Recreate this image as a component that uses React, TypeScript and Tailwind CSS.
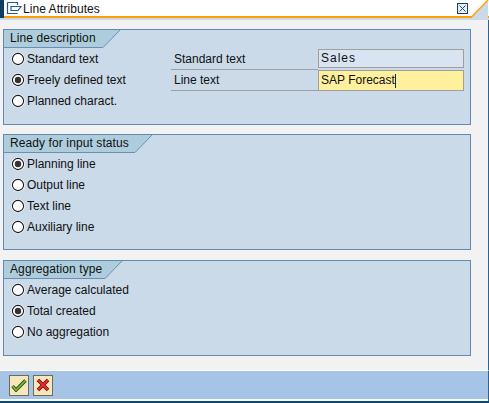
const font = { fontFamily: '"Liberation Sans", Arial, sans-serif' };

function Radio({ checked, label }: { checked?: boolean; label: string }) {
  return (
    <div className="flex h-[21px] items-center">
      <svg width="14" height="14" viewBox="0 0 14 14" className="ml-[7px] mr-[2px] shrink-0">
        <circle cx="7" cy="7" r="6.8" fill="#ffffff" opacity="0.8" />
        <circle cx="7" cy="7" r="5.6" fill="#ffffff" stroke="#1c1c1c" strokeWidth="1.1" />
        {checked && <circle cx="7" cy="7" r="3.2" fill="#333333" />}
      </svg>
      <span className="text-[12px] leading-[14px] text-[#101010]">{label}</span>
    </div>
  );
}

function Header({ title, w }: { title: string; w: number }) {
  return (
    <div className="relative h-[18px] w-full">
      <svg width={w + 20} height="18" className="absolute left-0 top-0">
        <path d={`M0 0H${w + 18}L${w + 1} 17.5H0Z`} fill="#aecddc" />
        <path d={`M${w + 18} 0L${w + 1} 17.5H0`} fill="none" stroke="#6a8fb0" strokeWidth="1" />
      </svg>
      <span className="absolute left-[6px] top-[1px] text-[12px] leading-[15px] tracking-[0.1px] text-[#101010]">{title}</span>
    </div>
  );
}

function Panel({ title, w, h, children, className }: { title: string; w: number; h: number; children: React.ReactNode; className: string }) {
  return (
    <section className={`w-[468px] border border-[#6389ae] bg-[#cbdae9] ${className}`} style={{ height: h }}>
      <Header title={title} w={w} />
      {children}
    </section>
  );
}

export default function App() {
  return (
    <div className="flex h-[403px] w-[489px] flex-col overflow-hidden bg-[#f2f2f2]" style={font}>
      <header className="relative flex h-[18px] shrink-0 items-center border-b-2 border-[#ff9e00] bg-white">
        <div className="h-[18px] w-[4px] shrink-0 self-start bg-[#0e3f63]" />
        <svg width="16" height="14" viewBox="0 0 16 14" className="ml-[2px] shrink-0">
          <path d="M1.5 1.5H11.5V4M1.5 1.5V12.5H11.5" fill="none" stroke="#1d5a8f" strokeWidth="1.2" />
          <path d="M5 5.5H15L12 9.5H5Z" fill="none" stroke="#1d5a8f" strokeWidth="1.2" />
        </svg>
        <span className="ml-[1px] mt-[1px] text-[12px] leading-[14px] tracking-[0.05px] text-[#101010]">Line Attributes</span>
        <div className="absolute left-[457px] top-[3px] flex h-[11px] w-[11px] items-center justify-center border border-[#123f6b] bg-[#e9eef4]">
          <svg width="7" height="7" viewBox="0 0 7 7">
            <path d="M0.5 0.5L6.5 6.5M6.5 0.5L0.5 6.5" stroke="#23466b" strokeWidth="1" />
          </svg>
        </div>
        <svg width="17" height="18" className="absolute right-0 top-0">
          <path d="M0 17L16 0.5V18H0Z" fill="#cbdae9" />
          <path d="M0 16.5L16 0" stroke="#ff9e00" strokeWidth="1.4" fill="none" />
        </svg>
      </header>
      <div className="h-[2px] shrink-0 bg-[#cbdae9]" />

      <main className="flex flex-1 flex-col border-r border-[#2e6390] pl-[3px]">
        <Panel title="Line description" w={98} h={96} className="mt-[9px]">
          <div className="relative">
            <Radio label="Standard text" />
            <Radio checked label="Freely defined text" />
            <Radio label="Planned charact." />
            <div className="absolute left-[167px] top-[1px] w-[293px]">
              <div className="flex h-[21px] items-stretch">
                <div className="w-[147px] border-b border-[#a09f9d] pl-[3px] pt-[3px] text-[12px] leading-[15px] text-[#101010]">Standard text</div>
                <div className="w-[146px] border border-[#a09f9d] bg-[#d9e4f3] pl-[2px] text-[12px] leading-[17px] tracking-[1px] text-[#101010]" style={{ height: 19 }}>Sales</div>
              </div>
              <div className="flex h-[21px] items-stretch">
                <div className="w-[147px] border-b border-[#a09f9d] pl-[3px] pt-[3px] text-[12px] leading-[15px] text-[#101010]">Line text</div>
                <div className="flex w-[146px] border border-[#a09f9d] bg-[#fff09e] pl-[2px] text-[12px] leading-[19px] text-[#101010]">
                  <span>SAP Forecast</span>
                  <span className="mt-[3px] h-[14px] w-[1px] bg-[#0a2a4a]" />
                </div>
              </div>
            </div>
          </div>
        </Panel>

        <Panel title="Ready for input status" w={130} h={116} className="mt-[9px]">
          <Radio checked label="Planning line" />
          <Radio label="Output line" />
          <Radio label="Text line" />
          <Radio label="Auxiliary line" />
        </Panel>

        <Panel title="Aggregation type" w={100} h={96} className="mt-[10px]">
          <Radio label="Average calculated" />
          <Radio checked label="Total created" />
          <Radio label="No aggregation" />
        </Panel>
      </main>

      <footer className="flex h-[29px] shrink-0 items-center gap-[4px] border-r border-t border-r-[#2e6390] border-t-white bg-[#a6c4e6] pl-[9px]">
        <button className="flex h-[21px] w-[20px] items-center justify-center border border-[#6b6b60] bg-[#f7e6bb]">
          <svg width="16" height="14" viewBox="0 0 16 14">
            <path d="M1.5 8L5 12L14.5 2.5" fill="none" stroke="#1f4a10" strokeWidth="3.4" />
            <path d="M1.5 8L5 12L14.5 2.5" fill="none" stroke="#7fc12a" strokeWidth="1.6" />
          </svg>
        </button>
        <button className="flex h-[21px] w-[20px] items-center justify-center border border-[#6b6b60] bg-[#f7e6bb]">
          <svg width="14" height="14" viewBox="0 0 14 14">
            <path d="M2 2L12 12M12 2L2 12" fill="none" stroke="#5a1010" strokeWidth="3.6" />
            <path d="M2 2L12 12M12 2L2 12" fill="none" stroke="#ee2a2a" strokeWidth="2" />
          </svg>
        </button>
      </footer>
      <div className="h-[2px] shrink-0 border-r border-[#2e6390] bg-white" />
      <div className="h-[2px] shrink-0 bg-[#0e4a73]" />
    </div>
  );
}
